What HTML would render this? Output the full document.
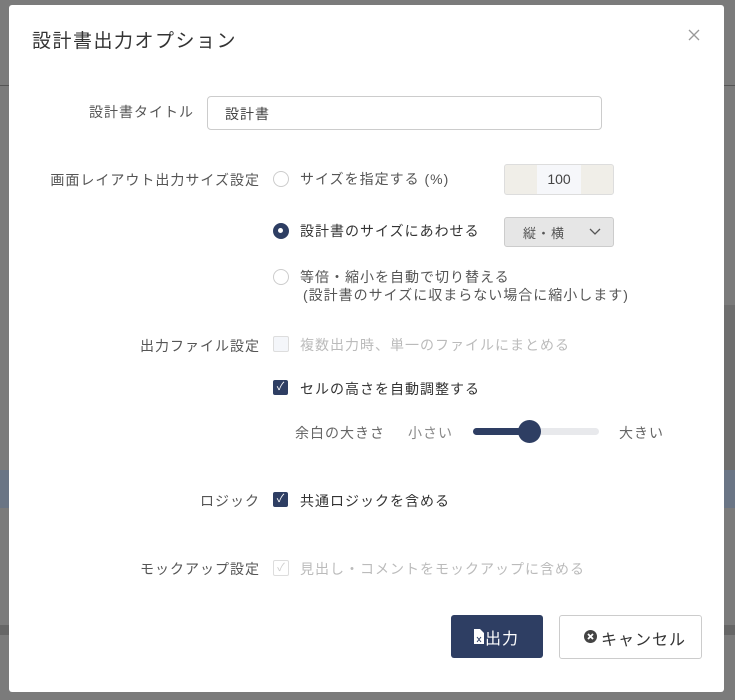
<!DOCTYPE html>
<html><head><meta charset="utf-8"><style>
body{margin:0;width:735px;height:700px;background:#7b7b7b;position:relative;overflow:hidden;font-family:"Liberation Sans","Noto Sans CJK JP",sans-serif;color:#555;font-size:14px;letter-spacing:1px}
.a{position:absolute;white-space:nowrap}
.modal{position:absolute;left:9px;top:5px;width:715px;height:687px;background:#fff;border-radius:3px}
.lbl{position:absolute;right:464px;text-align:right;white-space:nowrap;color:#555}
.radio{position:absolute;width:14px;height:14px;border:1px solid #ccc;border-radius:50%;background:#fff}
.cb{position:absolute;width:15px;height:15px;border-radius:2px;background:#2e3e63;color:#fff;font-size:11px;line-height:15px;text-align:center;letter-spacing:0}
</style></head><body>
<div class="a" style="left:0;top:85px;width:9px;height:1px;background:#555"></div>
<div class="a" style="left:724px;top:85px;width:11px;height:1px;background:#555"></div>
<div class="a" style="left:724px;top:305px;width:11px;height:165px;background:#6e6e6e"></div>
<div class="a" style="left:0;top:470px;width:9px;height:38px;background:#6a7585"></div>
<div class="a" style="left:724px;top:470px;width:11px;height:38px;background:#6a7585"></div>
<div class="a" style="left:0;top:625px;width:735px;height:10px;background:#666"></div>
<div class="modal">
<div class="a" style="left:23px;top:21px;font-size:19px;color:#333;letter-spacing:1.5px">設計書出力オプション</div>
<svg class="a" style="left:679px;top:24px" width="12" height="12"><path d="M1 1L11 11M11 1L1 11" stroke="#999" stroke-width="1.3"/></svg>
<div class="lbl" style="top:97px;right:530px">設計書タイトル</div>
<div class="a" style="left:198px;top:91px;width:393px;height:32px;border:1px solid #ccc;border-radius:4px"></div>
<div class="a" style="left:216px;top:99px;color:#444">設計書</div>
<div class="lbl" style="top:165px">画面レイアウト出力サイズ設定</div>
<div class="radio" style="left:264px;top:166px"></div>
<div class="a" style="left:291px;top:164px">サイズを指定する (%)</div>
<div class="a" style="left:495px;top:159px;width:108px;height:29px;border:1px solid #ddd;border-radius:3px;background:#f0eee8"></div>
<div class="a" style="left:528px;top:160px;width:44px;height:29px;background:#f6f7fa;text-align:center;line-height:29px;color:#444;letter-spacing:0">100</div>
<div class="radio" style="left:264px;top:218px;background:#2e3e63;border-color:#2e3e63"></div>
<div class="a" style="left:269px;top:223px;width:5px;height:5px;border-radius:50%;background:#fff"></div>
<div class="a" style="left:291px;top:216px;color:#333">設計書のサイズにあわせる</div>
<div class="a" style="left:495px;top:212px;width:108px;height:28px;border:1px solid #ccc;border-radius:3px;background:#e6e6e6"></div>
<div class="a" style="left:514px;top:218px;font-size:13px;color:#555">縦・横</div>
<svg class="a" style="left:580px;top:223px" width="12" height="8"><path d="M1 1L6 6L11 1" stroke="#555" fill="none" stroke-width="1.3"/></svg>
<div class="radio" style="left:264px;top:264px"></div>
<div class="a" style="left:291px;top:262px">等倍・縮小を自動で切り替える</div>
<div class="a" style="left:294px;top:280px">(設計書のサイズに収まらない場合に縮小します)</div>
<div class="lbl" style="top:331px">出力ファイル設定</div>
<div class="a" style="left:264px;top:331px;width:14px;height:14px;border:1px solid #ddd;border-radius:2px;background:#f4f6fa"></div>
<div class="a" style="left:291px;top:330px;color:#bbb">複数出力時、単一のファイルにまとめる</div>
<div class="cb" style="left:264px;top:375px">✓</div>
<div class="a" style="left:291px;top:374px;color:#333">セルの高さを自動調整する</div>
<div class="a" style="left:286px;top:418px;color:#666">余白の大きさ</div>
<div class="a" style="left:399px;top:418px;color:#888">小さい</div>
<div class="a" style="left:464px;top:423px;width:126px;height:7px;border-radius:4px;background:#e8e9ec"></div>
<div class="a" style="left:464px;top:423px;width:60px;height:7px;border-radius:4px;background:#2e3e63"></div>
<div class="a" style="left:509px;top:415px;width:23px;height:23px;border-radius:50%;background:#2e3e63"></div>
<div class="a" style="left:610px;top:418px;color:#666">大きい</div>
<div class="lbl" style="top:486px">ロジック</div>
<div class="cb" style="left:264px;top:487px">✓</div>
<div class="a" style="left:291px;top:486px;color:#333">共通ロジックを含める</div>
<div class="lbl" style="top:554px">モックアップ設定</div>
<div class="a" style="left:264px;top:555px;width:14px;height:14px;border:1px solid #ddd;border-radius:2px;color:#ccc;font-size:11px;line-height:14px;text-align:center;letter-spacing:0">✓</div>
<div class="a" style="left:291px;top:554px;color:#bbb">見出し・コメントをモックアップに含める</div>
<div class="a" style="left:442px;top:610px;width:92px;height:43px;border-radius:3px;background:#2e3e63"></div>
<svg class="a" style="left:465px;top:624px" width="10" height="15"><path d="M0 0H6L10 4V15H0Z" fill="#fff"/><path d="M3 8L7 13M7 8L3 13" stroke="#2e3e63" stroke-width="1"/></svg>
<div class="a" style="left:476px;top:620px;color:#fff;font-size:16px">出力</div>
<div class="a" style="left:550px;top:610px;width:141px;height:42px;border:1px solid #ccc;border-radius:3px"></div>
<div class="a" style="left:575px;top:625px;width:13px;height:13px;border-radius:50%;background:#444"></div>
<svg class="a" style="left:575px;top:625px" width="13" height="13"><path d="M4 4L9 9M9 4L4 9" stroke="#fff" stroke-width="1.8"/></svg>
<div class="a" style="left:592px;top:621px;color:#333;font-size:16px">キャンセル</div>
</div>
</body></html>
